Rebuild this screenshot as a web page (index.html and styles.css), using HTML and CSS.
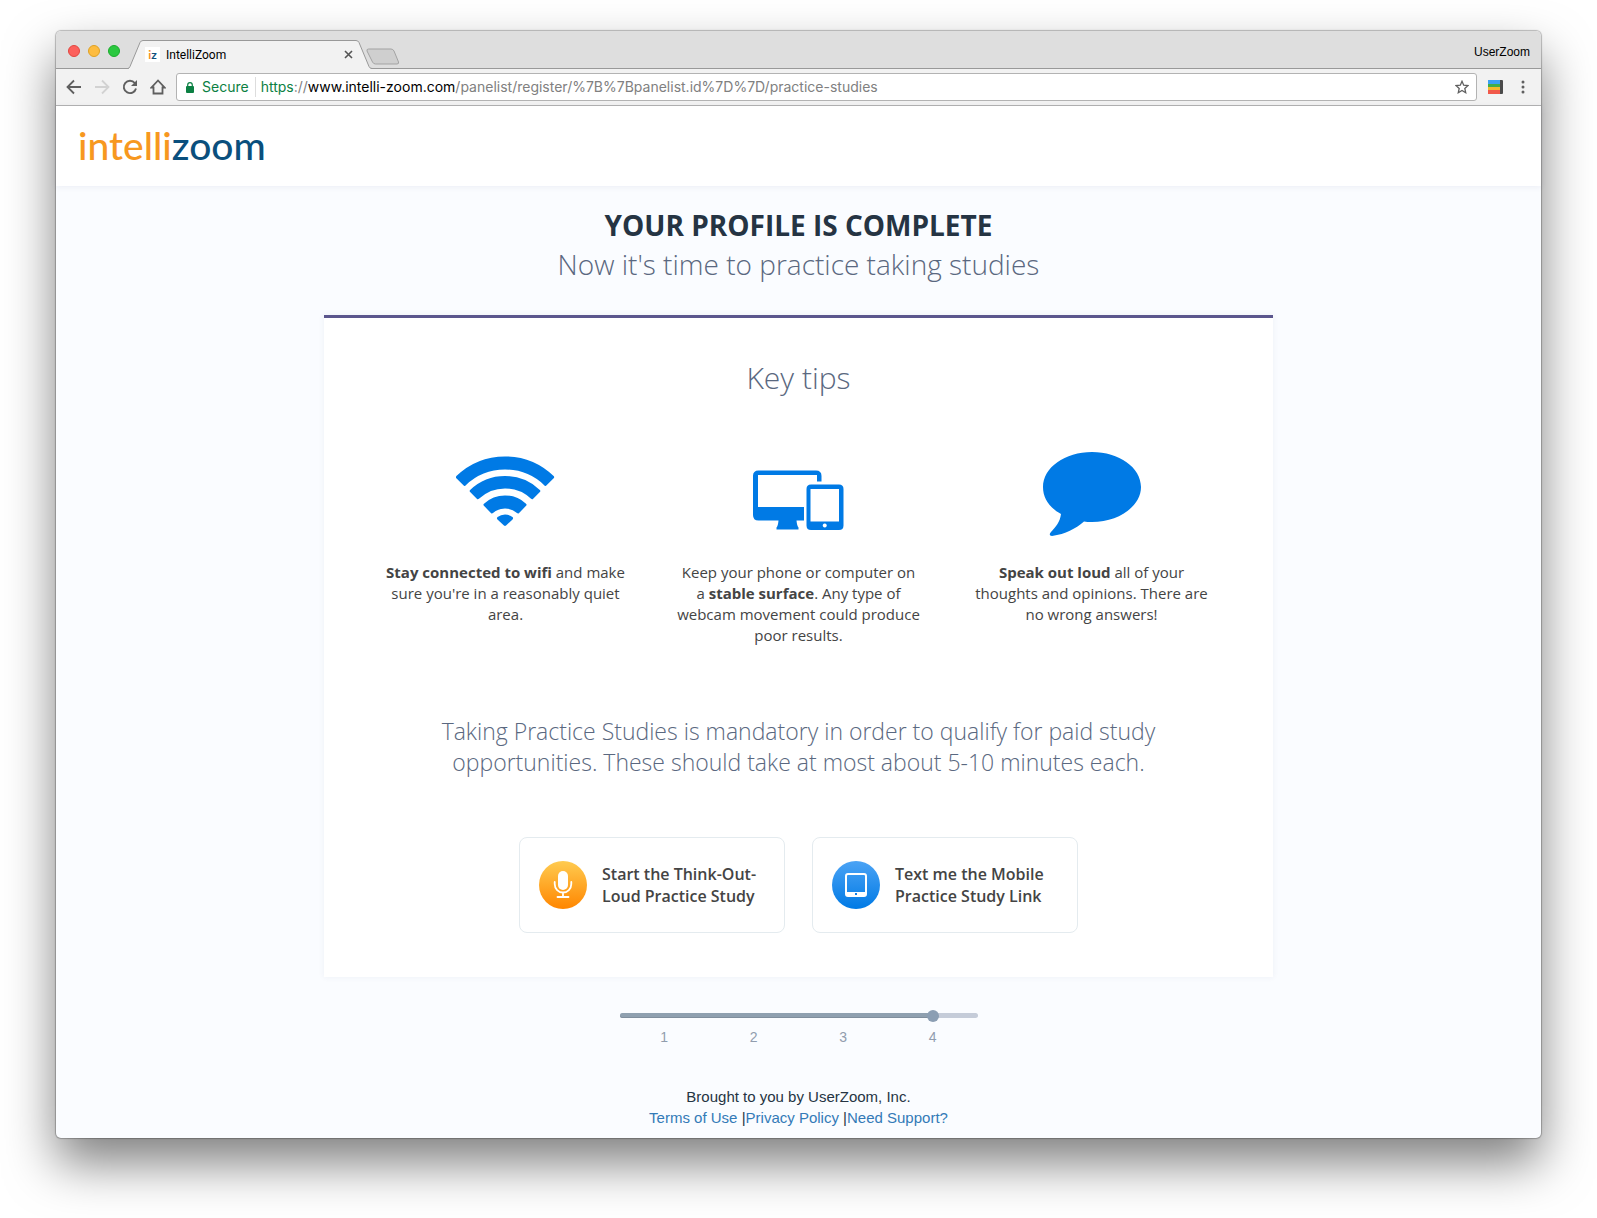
FILE: index.html
```html
<!DOCTYPE html>
<html lang="en">
<head>
    <meta charset="UTF-8">
    <meta name="viewport" content="width=device-width, initial-scale=1.0">
    <title>IntelliZoom</title>
    <link rel="stylesheet" href="styles.css">
</head>
<body>

<div class="window">
    <div class="tab-strip">
        <div class="lights">
            <span class="light red"></span>
            <span class="light yellow"></span>
            <span class="light green"></span>
        </div>
        <div class="tab">
            <svg class="tab-shape" width="244" height="29" viewBox="0 0 244 29">
                <path d="M0 29 Q1 28.500 2 26.500 L12 2.500 Q13 .5 15 .5 H228 Q230 .5 231 2.500 L241 26.500 Q242 28.500 244 29Z" fill="#f2f2f2"/>
                <path d="M0 28.500 Q1 28.500 2 26.500 L12 2.500 Q13 .5 15 .5 H228 Q230 .5 231 2.500 L241 26.500 Q242 28.500 244 28.500" fill="none" stroke="#999"/>
            </svg>
            <span class="favicon"><span>i</span>z</span>
            <span class="tab-title">IntelliZoom</span>
            <button class="tab-close" aria-label="Close tab">
                <svg width="9" height="9" viewBox="0 0 9 9"><path d="M1 1l7 7M8 1l-7 7" stroke="#555" stroke-width="1.600"/></svg>
            </button>
        </div>
        <button class="new-tab" aria-label="New tab">
            <svg width="34" height="17" viewBox="0 0 34 17"><path d="M2.500 1 H25 Q27 1 28 3 L32.500 14 Q33 16 31 16 H9.500 Q7.500 16 6.500 14 L1 3 Q.5 1 2.500 1Z" fill="#cfcfcf" stroke="#a3a3a3"/></svg>
        </button>
        <span class="profile">UserZoom</span>
    </div>

    <div class="toolbar">
        <div class="nav">
            <button aria-label="Back">
                <svg width="16" height="16" viewBox="0 0 16 16"><path d="M15 8H2M8 1.500L1.500 8L8 14.500" fill="none" stroke="#5f5f5f" stroke-width="1.800"/></svg>
            </button>
            <button aria-label="Forward">
                <svg width="16" height="16" viewBox="0 0 16 16"><path d="M1 8H14M8 1.500L14.500 8L8 14.500" fill="none" stroke="#d2d2d2" stroke-width="1.800"/></svg>
            </button>
            <button aria-label="Reload">
                <svg width="16" height="16" viewBox="0 0 16 16"><path d="M12.800 4A6.200 6.200 0 1 0 14 9.500" fill="none" stroke="#5f5f5f" stroke-width="1.900"/><path d="M15 1V7H9Z" fill="#5f5f5f"/></svg>
            </button>
            <button aria-label="Home">
                <svg width="16" height="16" viewBox="0 0 16 16"><path d="M8 1.500L1.500 8.500H3.500V14.500H12.500V8.500H14.500Z" fill="none" stroke="#5f5f5f" stroke-width="1.800"/></svg>
            </button>
        </div>
        <div class="address">
            <svg width="8" height="11" viewBox="0 0 8 11"><rect y="4" width="8" height="7" rx="1" fill="#0b8043"/><path d="M1.700 5V3a2.300 2.300 0 0 1 4.600 0v2" fill="none" stroke="#0b8043" stroke-width="1.200"/></svg>
            <span class="secure">Secure</span>
            <span class="url"><span class="scheme">https</span>://<span class="host">www.intelli-zoom.com</span>/panelist/register/%7B%7Bpanelist.id%7D%7D/practice-studies</span>
            <button class="star" aria-label="Bookmark">
                <svg width="14" height="14" viewBox="0 0 14 14"><path d="M7 1.300L8.700 5.200L13 5.600L9.800 8.500L10.700 12.700L7 10.500L3.300 12.700L4.200 8.500L1 5.600L5.300 5.200Z" fill="none" stroke="#5f5f5f" stroke-width="1.300"/></svg>
            </button>
        </div>
        <button class="ext" aria-label="Extension">
            <svg width="15" height="14" viewBox="0 0 15 14">
                <rect x="11" width="4" height="14" rx="1" fill="#4a4a4a"/>
                <rect width="12" height="4" fill="#3ba0f3"/>
                <rect y="4" width="12" height="3" fill="#3fae49"/>
                <rect y="7" width="12" height="3" fill="#f4b92b"/>
                <rect y="10" width="12" height="4" fill="#f1594a"/>
            </svg>
        </button>
        <button class="menu" aria-label="Menu">
            <svg width="4" height="14" viewBox="0 0 4 14" fill="#5f5f5f"><circle cx="2" cy="2" r="1.500"/><circle cx="2" cy="7" r="1.500"/><circle cx="2" cy="12" r="1.500"/></svg>
        </button>
    </div>

    <header class="site-header">
        <a href="#" class="logo">intelli<span>zoom</span></a>
    </header>

    <main>
        <h1>YOUR PROFILE IS COMPLETE</h1>
        <p class="subtitle">Now it's time to practice taking studies</p>

        <section class="card">
            <h2>Key tips</h2>
            <div class="tips">
                <div class="tip">
                    <!-- wifi -->
                    <svg width="100" height="100" viewBox="0 0 100 100">
                        <g transform="translate(49 82.500)" fill="#007ae5" stroke="#007ae5" stroke-width="3" stroke-linejoin="round">
                            <path d="M-47.600 -49.300A68.500 68.500 0 0 1 47.600 -49.300L40.500 -42.200A58.500 58.500 0 0 0 -40.500 -42.200Z"/>
                            <path d="M-33.800 -35.500A49 49 0 0 1 33.800 -35.500L27.100 -28.800A39.500 39.500 0 0 0 -27.100 -28.800Z"/>
                            <path d="M-20 -21.700A29.500 29.500 0 0 1 20 -21.700L13 -14.600A19.500 19.500 0 0 0 -13 -14.600Z"/>
                            <path d="M-6.500 -8.200A10.500 10.500 0 0 1 6.500 -8.200L0 -2Z"/>
                        </g>
                    </svg>
                    <p><b>Stay connected to wifi</b> and make sure you're in a reasonably quiet area.</p>
                </div>
                <div class="tip">
                    <!-- monitor and tablet -->
                    <svg width="100" height="100" viewBox="0 0 100 100" fill="#007ae5">
                        <path d="M9.500 26.500H67Q72.500 26.500 72.500 32V37.500H68V31H9V63H55V76.500H47.500Q48 82 49.500 83.500V85.500H27.500V83.500Q29 82 29.500 76.500H9.500Q4 76.500 4 71V32Q4 26.500 9.500 26.500Z" fill-rule="evenodd"/>
                        <path d="M62 40.500H90Q94.500 40.500 94.500 45V81.500Q94.500 86 90 86H62Q57.500 86 57.500 81.500V45Q57.500 40.500 62 40.500ZM61.500 45V77.500H90V45ZM75.700 79.500A2 2 0 1 0 75.800 79.500Z" fill-rule="evenodd"/>
                    </svg>
                    <p>Keep your phone or computer on a <b>stable surface</b>. Any type of webcam movement could produce poor results.</p>
                </div>
                <div class="tip">
                    <!-- speech bubble -->
                    <svg width="100" height="100" viewBox="0 0 100 100" fill="#007ae5">
                        <path d="M50 8C77 8 99 23.500 99 43C99 62 77 78 50 78Q45 78 42 77.500C33 85 24 90 10 92C7.500 92 7 90 9 88C14 82.500 18 78 19 70C7 63.500 1 54 1 43C1 23.500 23 8 50 8Z"/>
                    </svg>
                    <p><b>Speak out loud</b> all of your thoughts and opinions. There are no wrong answers!</p>
                </div>
            </div>
            <p class="notice">Taking Practice Studies is mandatory in order to qualify for paid study opportunities. These should take at most about 5-10 minutes each.</p>
            <div class="actions">
                <button class="action-btn">
                    <span class="circle orange">
                        <svg width="20" height="28" viewBox="0 0 20 28"><rect x="5" y="0" width="10" height="19" rx="5" fill="#fff"/><path d="M1.700 11V13A8.300 8.500 0 0 0 18.300 13V11M10 22V26M4.500 26H15.500" fill="none" stroke="#fff" stroke-width="1.800" stroke-linecap="round"/></svg>
                    </span>
                    <span>Start the Think-Out-Loud Practice Study</span>
                </button>
                <button class="action-btn">
                    <span class="circle blue">
                        <svg width="22" height="24" viewBox="0 0 22 24"><rect x="1" y="1" width="20" height="22" rx="2" fill="none" stroke="#fff" stroke-width="2"/><path d="M2 19H20V23H2Z" fill="#fff"/><rect x="10" y="20" width="2" height="2" fill="#1180e8"/></svg>
                    </span>
                    <span>Text me the Mobile Practice Study Link</span>
                </button>
            </div>
        </section>

        <div class="steps">
            <div class="steps-bar"><div class="steps-done"></div></div>
            <ol>
                <li>1</li>
                <li>2</li>
                <li>3</li>
                <li>4</li>
            </ol>
        </div>
    </main>

    <footer>
        <div>Brought to you by UserZoom, Inc.</div>
        <div><a href="#">Terms of Use</a> |<a href="#">Privacy Policy</a> |<a href="#">Need Support?</a></div>
    </footer>
</div>

</body>
</html>
```
FILE: styles.css
```css
* {
    box-sizing: border-box;
}
body {
    margin: 0;
    padding: 31px 56px 80px;
    background-color: #fff;
    font-family: "Open Sans", sans-serif;
    color: #444;
}
h1, h2, p, ol {
    margin: 0;
    padding: 0;
}
button {
    font-family: inherit;
    padding: 0;
    border: none;
    background: none;
    cursor: pointer;
}
svg {
    display: block;
}
.window {
    background-color: #fafcff;
    border-radius: 5px;
    box-shadow: 0 0 1px 1px rgba(0, 0, 0, 0.25), 0 25px 50px rgba(0, 0, 0, 0.5);
}

/* browser chrome */
.tab-strip {
    display: flex;
    align-items: flex-end;
    height: 38px;
    padding-right: 11px;
    background-color: #dedede;
    border-radius: 5px 5px 0 0;
    box-shadow: inset 0 -1px #999;
    font-family: "Liberation Sans", sans-serif;
    font-size: 12px;
    color: #000;
}
.lights {
    display: flex;
    gap: 8px;
    padding: 0 8px 12px 12px;
}
.light {
    width: 12px;
    height: 12px;
    border-radius: 50%;
}
.red {
    background-color: #fc605c;
    border: 1px solid #e2463f;
}
.yellow {
    background-color: #fdbc40;
    border: 1px solid #dfa123;
}
.green {
    background-color: #2bc840;
    border: 1px solid #1bac2c;
}
.tab {
    position: relative;
    display: flex;
    align-items: center;
    width: 244px;
    height: 29px;
    padding: 0 19px 0 17px;
    font-family: Roboto, sans-serif;
}
.tab-shape {
    position: absolute;
    left: 0;
    top: 0;
}
.favicon, .tab-title, .tab-close {
    position: relative;
}
.favicon {
    width: 15px;
    margin-right: 6px;
    background-color: #fff;
    font: bold 12px/15px Lato, sans-serif;
    text-align: center;
    color: #12507c;
}
.favicon span {
    color: #f7931e;
}
.tab-close {
    margin-left: auto;
}
.new-tab {
    margin: 0 0 4px -6px;
}
.profile {
    margin-left: auto;
    line-height: 14px;
    padding-bottom: 10px;
}
.toolbar {
    display: flex;
    align-items: center;
    height: 37px;
    padding: 0 16px 0 10px;
    background-color: #f2f2f2;
    border-bottom: 1px solid #b3b3b3;
}
.nav {
    display: flex;
    gap: 12px;
    margin-right: 10px;
}
.address {
    flex: 1;
    display: flex;
    align-items: center;
    height: 28px;
    margin-right: 11px;
    padding: 0 7px 0 9px;
    background-color: #fff;
    border: 1px solid #b3b3b3;
    border-radius: 3px;
    font: 14px/20px Inter, sans-serif;
    color: #808080;
}
.secure {
    margin-left: 8px;
    padding-right: 6px;
    border-right: 1px solid #ddd;
}
.secure, .scheme {
    color: #0b8043;
}
.url {
    margin-left: 5px;
}
.host {
    color: #000;
}
.star {
    margin-left: auto;
}
.menu {
    margin-left: 18px;
}

/* page */
.site-header {
    display: flex;
    align-items: center;
    height: 80px;
    padding: 0 22px 2px;
    background-color: #fff;
    box-shadow: 0 1px 6px rgba(60, 70, 120, 0.08);
}
.logo {
    font: 500 39px/48px Lato, sans-serif;
    color: #f7981f;
    text-decoration: none;
}
.logo span {
    color: #0a4f7d;
}
main {
    padding-top: 20px;
    text-align: center;
}
h1 {
    font-size: 28px;
    line-height: 38px;
    font-weight: 700;
    color: #253443;
}
.subtitle {
    font-size: 28px;
    line-height: 40px;
    font-weight: 300;
    color: #5a6880;
}
.card {
    max-width: 949px;
    margin: 31px auto 36px;
    padding: 38px 35px 44px;
    background-color: #fff;
    border-top: 3px solid #5b568d;
    box-shadow: 0 0 6px rgba(60, 70, 120, 0.07);
}
h2 {
    margin-bottom: 44px;
    font-size: 30px;
    line-height: 44px;
    font-weight: 300;
    color: #5a6880;
}
.tips {
    display: grid;
    grid-template-columns: repeat(3, 1fr);
    font-size: 15px;
    line-height: 21px;
}
.tip {
    padding: 0 24px;
}
.tip svg {
    margin: 0 auto 18px;
}
.notice {
    max-width: 740px;
    margin: 70px auto 59px;
    font-size: 23px;
    line-height: 31px;
    font-weight: 300;
    color: #5a6880;
}
.actions {
    display: flex;
    justify-content: center;
    gap: 27px;
}
.action-btn {
    display: flex;
    align-items: center;
    gap: 15px;
    width: 266px;
    height: 96px;
    padding: 0 19px;
    background-color: #fff;
    border: 1px solid #e4ebef;
    border-radius: 8px;
    font-size: 16px;
    line-height: 22px;
    font-weight: 600;
    color: #444;
    text-align: left;
}
.circle {
    flex: none;
    display: flex;
    align-items: center;
    justify-content: center;
    width: 48px;
    height: 48px;
    border-radius: 50%;
}
.orange {
    background: linear-gradient(#ffcb50, #ff8600);
}
.blue {
    background: linear-gradient(#4ba3f5, #007ae5);
}
.steps {
    width: 358px;
    margin: 0 auto;
    font: 14px/20px "Liberation Sans", sans-serif;
    color: #919dae;
}
.steps-bar {
    height: 5px;
    margin-bottom: 9px;
    background-color: #c5ccd9;
    border-radius: 3px;
}
.steps-done {
    position: relative;
    width: 87.5%;
    height: 5px;
    background-color: #8fa0b0;
    border-radius: 3px;
    box-shadow: inset 0 -1px #7f8e9d;
}
.steps-done::after {
    content: "";
    position: absolute;
    right: -6px;
    top: -3px;
    width: 12px;
    height: 12px;
    background-color: #8b9eb3;
    border-radius: 50%;
}
.steps ol {
    display: grid;
    grid-template-columns: repeat(4, 1fr);
    list-style: none;
}
footer {
    padding: 39px 0 10px;
    font: 15px/21px "Liberation Sans", sans-serif;
    color: #253443;
    text-align: center;
}
footer a {
    color: #337ab7;
    text-decoration: none;
}
```
